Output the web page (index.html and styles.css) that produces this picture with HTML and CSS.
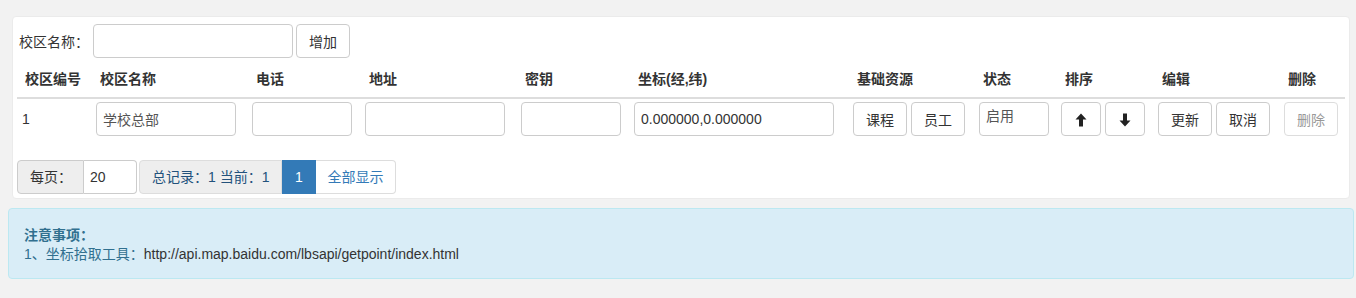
FILE: index.html
```html
<!DOCTYPE html>
<html lang="zh-CN">
<head>
    <meta charset="UTF-8">
    <title>校区管理</title>
    <link rel="stylesheet" href="styles.css">
</head>
<body>
    <div class="panel">
        <div class="addbar">
            <label class="addlabel">校区名称：</label>
            <input type="text" class="field addinput">
            <button class="btn">增加</button>
        </div>

        <table class="grid">
            <thead>
                <tr>
                    <th class="c-id">校区编号</th>
                    <th class="c-name">校区名称</th>
                    <th class="c-tel">电话</th>
                    <th class="c-addr">地址</th>
                    <th class="c-key">密钥</th>
                    <th class="c-pos">坐标(经,纬)</th>
                    <th class="c-res">基础资源</th>
                    <th class="c-state">状态</th>
                    <th class="c-sort">排序</th>
                    <th class="c-edit">编辑</th>
                    <th class="c-del">删除</th>
                </tr>
            </thead>
            <tbody>
                <tr>
                    <td class="num">1</td>
                    <td><input type="text" class="field w140 muted" value="学校总部"></td>
                    <td><input type="text" class="field w100"></td>
                    <td><input type="text" class="field w140"></td>
                    <td><input type="text" class="field w100"></td>
                    <td><input type="text" class="field w200" value="0.000000,0.000000"></td>
                    <td>
                        <button class="btn">课程</button>
                        <button class="btn">员工</button>
                    </td>
                    <td><input type="text" class="field w70 state muted" value="启用"></td>
                    <td>
                        <button class="btn icon">
                            <svg width="12" height="14" viewBox="0 0 12 14"><path d="M6 0.5 L11.5 6.5 L8 6.5 L8 13.5 L4 13.5 L4 6.5 L0.5 6.5 Z" fill="#222"/></svg>
                        </button>
                        <button class="btn icon">
                            <svg width="12" height="14" viewBox="0 0 12 14"><path d="M6 13.5 L11.5 7.5 L8 7.5 L8 0.5 L4 0.5 L4 7.5 L0.5 7.5 Z" fill="#222"/></svg>
                        </button>
                    </td>
                    <td>
                        <button class="btn">更新</button>
                        <button class="btn">取消</button>
                    </td>
                    <td><button class="btn disabled">删除</button></td>
                </tr>
            </tbody>
        </table>

        <div class="pager">
            <div class="group">
                <span class="addon">每页：</span>
                <input type="text" class="pagesize" value="20">
            </div>
            <ul class="pages">
                <li class="info">总记录：1 当前：1</li>
                <li class="active">1</li>
                <li class="link">全部显示</li>
            </ul>
        </div>
    </div>

    <div class="notice">
        <div class="notice-title">注意事项：</div>
        <div>1、坐标拾取工具：<span class="url">http://api.map.baidu.com/lbsapi/getpoint/index.html</span></div>
    </div>
</body>
</html>
```

FILE: styles.css
```css
/* Page */
body {
    margin: 0;
    padding: 16px 2px 0 8px;
    background-color: #f2f2f2;
    font-family: "Liberation Sans", "Noto Sans CJK SC", sans-serif;
    font-size: 14px;
    color: #333;
}

/* White panel */
.panel {
    margin-left: 4px;
    width: 1328px;
    background-color: #fff;
    border: 1px solid #ebebeb;
    border-radius: 4px;
    padding: 7px 4px 4px 4px;
}

.addbar {
    display: flex;
    align-items: center;
    gap: 3px;
}

.addlabel {
    margin-left: 2px;
    margin-right: 1px;
}

/* Inputs and buttons */
.field {
    box-sizing: border-box;
    height: 34px;
    padding: 6px 6px;
    border: 1px solid #ccc;
    border-radius: 4px;
    font-family: inherit;
    font-size: 14px;
    color: #333;
    background: #fff;
    vertical-align: middle;
}

.addinput { width: 200px; }
.w70 { width: 70px; }
.w100 { width: 100px; }
.w140 { width: 140px; }
.w200 { width: 200px; }

.muted { color: #555; }
.state { padding-top: 2px; padding-bottom: 10px; }

.btn {
    box-sizing: border-box;
    height: 34px;
    min-width: 54px;
    padding: 0 12px;
    margin: 0;
    border: 1px solid #ccc;
    border-radius: 4px;
    background: #fff;
    font-family: inherit;
    font-size: 14px;
    color: #333;
    vertical-align: middle;
}

.btn.icon {
    min-width: 40px;
    width: 40px;
    padding: 0;
}

.btn.icon svg { display: block; margin: 2px auto 0; }

.btn.disabled {
    color: #999;
    border-color: #ddd;
}

/* Table */
.grid {
    width: 100%;
    table-layout: fixed;
    border-collapse: collapse;
    margin-top: 3px;
    margin-bottom: 20px;
}

.grid th {
    box-sizing: border-box;
    text-align: left;
    font-weight: bold;
    padding: 8px 4px 8px 8px;
    line-height: 20px;
    border-bottom: 2px solid #ddd;
    white-space: nowrap;
}

.grid td {
    padding: 3px 4px 4px 4px;
    white-space: nowrap;
}

.grid td.num { padding-left: 5px; }

.c-id { width: 75px; }
.c-name { width: 156px; }
.c-tel { width: 113px; }
.c-addr { width: 156px; }
.c-key { width: 113px; }
.c-pos { width: 219px; }
.c-res { width: 126px; }
.c-state { width: 82px; }
.c-sort { width: 97px; }
.c-edit { width: 126px; }
.c-del { width: 65px; }

/* Pager */
.pager {
    display: flex;
    gap: 2px;
}

.group {
    display: flex;
    height: 34px;
}

.addon {
    box-sizing: border-box;
    width: 67px;
    padding-left: 12px;
    line-height: 32px;
    background-color: #eee;
    border: 1px solid #ccc;
    border-radius: 4px 0 0 4px;
}

.pagesize {
    box-sizing: border-box;
    width: 53px;
    height: 34px;
    padding: 0 6px;
    border: 1px solid #ccc;
    border-left: none;
    border-radius: 0 4px 4px 0;
    font-family: inherit;
    font-size: 14px;
    color: #333;
}

.pages {
    display: flex;
    list-style: none;
    margin: 0;
    padding: 0;
}

.pages li {
    box-sizing: border-box;
    height: 34px;
    line-height: 32px;
    border: 1px solid #ddd;
    font-size: 14px;
}

.pages .info {
    width: 143px;
    padding-left: 12px;
    background-color: #eee;
    color: #23527c;
    border-radius: 4px 0 0 4px;
}

.pages .active {
    width: 34px;
    text-align: center;
    background-color: #337ab7;
    border-color: #337ab7;
    color: #fff;
}

.pages .link {
    width: 80px;
    text-align: center;
    color: #337ab7;
    border-left: none;
    border-radius: 0 4px 4px 0;
}

/* Notice box */
.notice {
    margin-top: 9px;
    width: 1314px;
    padding: 17px 15px 14px 15px;
    background-color: #d9edf7;
    border: 1px solid #bce8f1;
    border-radius: 4px;
    color: #31708f;
    line-height: 19px;
}

.notice-title { font-weight: bold; }

.url { color: #333; }
```
